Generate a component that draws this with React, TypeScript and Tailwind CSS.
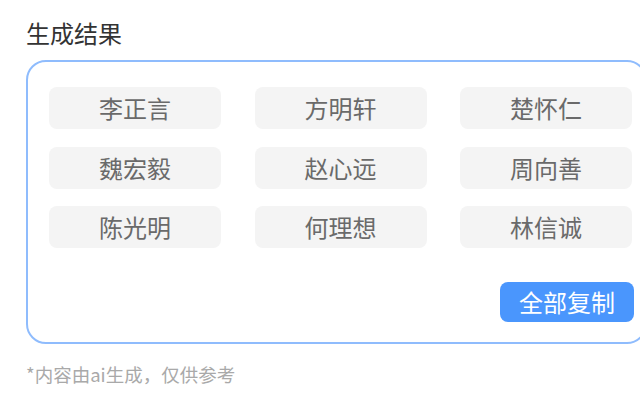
import React from "react";

const names = ["李正言", "方明轩", "楚怀仁", "魏宏毅", "赵心远", "周向善", "陈光明", "何理想", "林信诚"];

export default function App() {
  return (
    <div
      className="w-[640px] h-[400px] overflow-hidden bg-white pl-[26px] pt-[17px]"
      style={{ fontFamily: '"Noto Sans CJK SC", "Noto Sans", sans-serif' }}
    >
      <div className="text-[24px] leading-[32px] text-[#333333]">生成结果</div>
      <div className="mt-[11px] w-[621px] rounded-[20px] border-2 border-[#8fbcfd] pl-[21px] pr-[11px] pt-[25px] pb-[20px]">
        <div className="w-[585px]">
          <div className="grid grid-cols-[172px_172px_172px] gap-x-[33.5px] gap-y-[17.5px]">
            {names.map((n) => (
              <div
                key={n}
                className="flex h-[42px] items-center justify-center rounded-[8px] bg-[#f4f4f4] text-[24px] text-[#6a6a6a]"
              >
                {n}
              </div>
            ))}
          </div>
          <div className="mt-[34px] flex justify-end">
            <button className="flex h-[40px] w-[134px] items-center justify-center rounded-[8px] bg-[#4a96fd] text-[24px] text-white">
              全部复制
            </button>
          </div>
        </div>
      </div>
      <div className="mt-[18px] text-[18.5px] leading-[24px] text-[#a9a9a9]">*内容由ai生成，仅供参考</div>
    </div>
  );
}
